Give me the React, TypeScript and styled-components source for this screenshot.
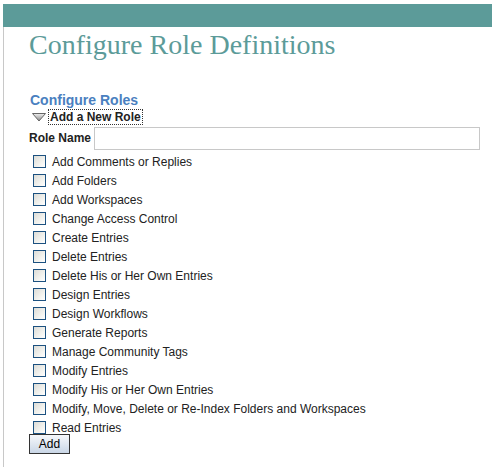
import React from "react";
import styled, { createGlobalStyle } from "styled-components";

const Global = createGlobalStyle`
  html, body { margin: 0; padding: 0; background: #fff; }
  body { font-family: "Liberation Sans", Arial, sans-serif; }
`;

const Page = styled.div`
  padding: 4px 0 0 3px;
  width: 489px;
`;

const TopBar = styled.div`
  height: 23px;
  background: #5c9b99;
`;

const Frame = styled.div`
  border-left: 1px solid #c8c8c8;
  min-height: 440px;
  padding: 0 0 0 25px;
`;

const Title = styled.h1`
  margin: 0;
  padding-top: 2px;
  font-family: "Liberation Serif", "Times New Roman", serif;
  font-weight: normal;
  font-size: 28px;
  line-height: 32px;
  color: #5c9b99;
  height: 63px;
`;

const Section = styled.h2`
  margin: 0;
  font-size: 14px;
  font-weight: bold;
  color: #4a7fc0;
  line-height: 17px;
  padding-left: 1px;
`;

const Toggle = styled.div`
  display: flex;
  align-items: center;
  gap: 3px;
  height: 16px;
  padding-left: 3px;
`;

const ToggleLabel = styled.span`
  font-size: 12px;
  font-weight: bold;
  color: #222;
  outline: 1px dotted #333;
  outline-offset: 0;
  padding: 0 1px;
  line-height: 14px;
`;

const NameRow = styled.div`
  display: flex;
  align-items: center;
  gap: 3px;
  margin-top: 2px;
  height: 22px;
`;

const NameLabel = styled.label`
  font-size: 12px;
  font-weight: bold;
  color: #222;
`;

const NameInput = styled.input`
  box-sizing: border-box;
  width: 386px;
  height: 23px;
  border: 1px solid #c8c8c8;
  outline: none;
  margin: 0;
`;

const List = styled.div`
  display: flex;
  flex-direction: column;
  margin-top: 3px;
  padding-left: 4px;
`;

const Item = styled.label`
  display: flex;
  align-items: center;
  height: 19px;
  gap: 6px;
  font-size: 12px;
  color: #222;
`;

const Box = styled.span`
  box-sizing: border-box;
  width: 13px;
  height: 13px;
  border: 1px solid #1c5180;
  background: linear-gradient(135deg, #dcdcd7 0%, #f2f2ee 60%, #fff 100%);
  flex: none;
`;

const AddButton = styled.button`
  box-sizing: border-box;
  display: block;
  width: 41px;
  height: 20px;
  margin-top: -3px;
  border: 1px solid #333;
  background: linear-gradient(#f6f8fb, #c9d6e6);
  font-family: "Liberation Sans", Arial, sans-serif;
  font-size: 12px;
  color: #000;
  padding: 0;
`;

const permissions = [
  "Add Comments or Replies",
  "Add Folders",
  "Add Workspaces",
  "Change Access Control",
  "Create Entries",
  "Delete Entries",
  "Delete His or Her Own Entries",
  "Design Entries",
  "Design Workflows",
  "Generate Reports",
  "Manage Community Tags",
  "Modify Entries",
  "Modify His or Her Own Entries",
  "Modify, Move, Delete or Re-Index Folders and Workspaces",
  "Read Entries",
];

export default function App() {
  return (
    <>
      <Global />
      <Page>
        <TopBar />
        <Frame>
          <Title>Configure Role Definitions</Title>
          <Section>Configure Roles</Section>
          <Toggle>
            <svg width="14" height="9" viewBox="0 0 14 9">
              <defs>
                <linearGradient id="tri" x1="0" y1="0" x2="0" y2="1">
                  <stop offset="0" stopColor="#f0f0f0" />
                  <stop offset="1" stopColor="#8a8a8a" />
                </linearGradient>
              </defs>
              <path d="M0.5 0.5 L13.5 0.5 L7 8 Z" fill="url(#tri)" stroke="#666" strokeWidth="1" />
            </svg>
            <ToggleLabel>Add a New Role</ToggleLabel>
          </Toggle>
          <NameRow>
            <NameLabel>Role Name</NameLabel>
            <NameInput />
          </NameRow>
          <List>
            {permissions.map((p) => (
              <Item key={p}>
                <Box />
                {p}
              </Item>
            ))}
          </List>
          <AddButton>Add</AddButton>
        </Frame>
      </Page>
    </>
  );
}
